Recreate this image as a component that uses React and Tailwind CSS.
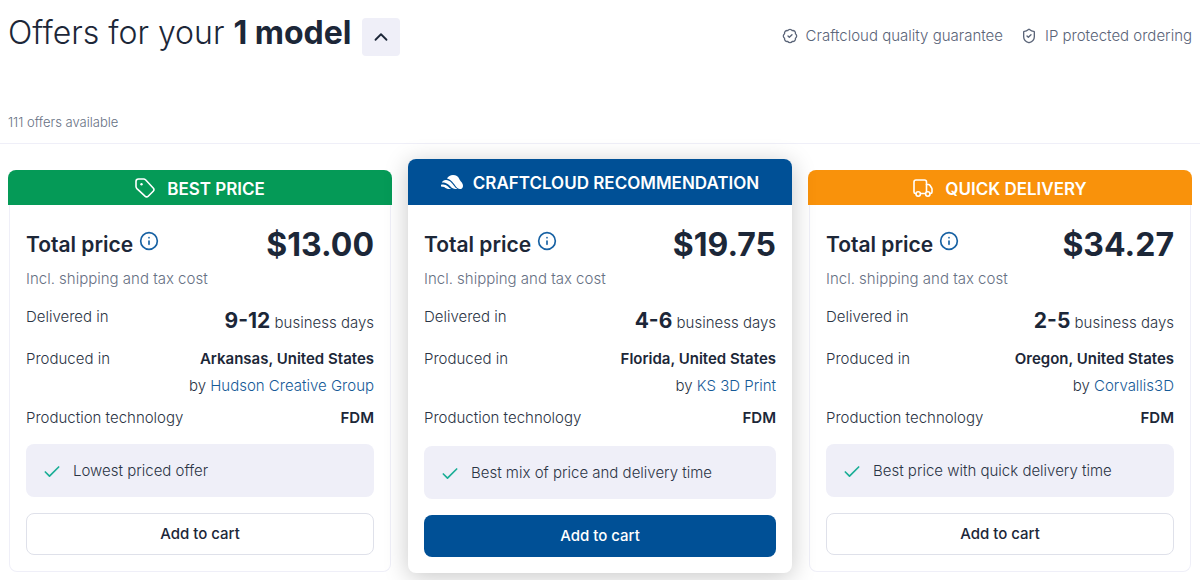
import React from 'react';
import { BadgeCheck, Check, ChevronUp, Info, ShieldCheck } from 'lucide-react';

const offers = [
    {
        id: 'price',
        title: 'BEST PRICE',
        price: '$13.00',
        days: '9-12',
        location: 'Arkansas, United States',
        vendor: 'Hudson Creative Group',
        technology: 'FDM',
        note: 'Lowest priced offer',
    },
    {
        id: 'recommended',
        title: 'CRAFTCLOUD RECOMMENDATION',
        price: '$19.75',
        days: '4-6',
        location: 'Florida, United States',
        vendor: 'KS 3D Print',
        technology: 'FDM',
        note: 'Best mix of price and delivery time',
    },
    {
        id: 'delivery',
        title: 'QUICK DELIVERY',
        price: '$34.27',
        days: '2-5',
        location: 'Oregon, United States',
        vendor: 'Corvallis3D',
        technology: 'FDM',
        note: 'Best price with quick delivery time',
    },
];

const bannerColors = {
    price: 'bg-[#059a57] h-[35px]',
    recommended: 'bg-[#005096] h-[46px]',
    delivery: 'bg-[#f9920b] h-[35px]',
};

function CloudLogo() {
    return (
        <svg viewBox="0 0 22 14" className="h-[14px] w-[22px]" fill="currentColor" aria-hidden="true">
            <path d="M6 3.600C7.200 1.300 9.400 0 12 0c3.200 0 5.300 1.500 6.300 4 .4 1 .9 1.600 1.600 2.400 1.400 1.500 2.100 2.900 2.100 4.500 0 1.900-1.300 3.100-3.100 3.100-1.800 0-2.800-.9-4-2.500C12.700 8.600 10.300 4.600 6 3.600z" />
            <path d="M.8 7.600C1.600 5.600 3.200 4.800 5.200 5c4 .5 5.800 3.200 7.800 5.800 1.100 1.500 2 2.500 3.400 3.200-3 .2-5-.4-6.700-2.200C7.300 9.300 5.300 7.500.8 7.600z" />
            <path d="M0 9.700c3-.8 5.200.1 7 1.900.9 1 1.900 1.900 3.200 2.400-2.500 0-4.200-.1-5.700-1.100-1.500-1-2.300-1.200-4.100-1.100C0 11.200-.1 10.500 0 9.700z" />
        </svg>
    );
}

function TagIcon() {
    return (
        <svg viewBox="0 0 20 20" className="h-5 w-5" fill="none" stroke="currentColor" strokeWidth="1.600" strokeLinecap="round" strokeLinejoin="round" aria-hidden="true">
            <path d="M1 3.500C1 2 2 1 3.500 1h5.200c.7 0 1.300.3 1.800.8l7.700 8.200c.9 1 .9 2.300 0 3.200l-5 5c-.9.900-2.300.9-3.200 0L1.900 10.600C1.300 10 1 9.300 1 8.600z" />
            <circle cx="6.500" cy="6.200" r="1.200" fill="currentColor" stroke="none" />
        </svg>
    );
}

function TruckIcon() {
    return (
        <svg viewBox="0 0 20 20" className="h-5 w-5" fill="none" stroke="currentColor" strokeWidth="1.600" strokeLinecap="round" strokeLinejoin="round" aria-hidden="true">
            <path d="M2.500 15.500C1.500 15.500 1 14.800 1 14V4c0-1.200.8-2 2-2h8.500c1.200 0 2 .8 2 2v11.500H8" />
            <path d="M13.500 6.500h2c.6 0 1 .3 1.400.8l1.600 2.400c.3.500.5.900.5 1.400V14c0 .9-.6 1.500-1.500 1.500" />
            <circle cx="5.200" cy="16" r="2.200" />
            <circle cx="14.800" cy="16" r="2.200" fill="#f9920b" />
        </svg>
    );
}

function BannerIcon({ id }) {
    if (id === 'price') return <TagIcon />;
    if (id === 'delivery') return <TruckIcon />;
    return <CloudLogo />;
}

function Row({ label, children }) {
    return (
        <div className="flex items-start justify-between">
            <dt>{label}</dt>
            <dd className="text-right">{children}</dd>
        </div>
    );
}

function OfferCard({ offer }) {
    const featured = offer.id === 'recommended';

    return (
        <article className={featured ? 'relative z-10 rounded-lg bg-white shadow-[0_4px_24px_rgba(0,0,0,0.22)]' : 'mt-[11px]'}>
            <h2 className={`flex items-center justify-center rounded-t-lg text-[17px] leading-6 font-semibold text-white ${featured ? 'gap-[10px]' : 'gap-3'} ${bannerColors[offer.id]}`}>
                <BannerIcon id={offer.id} />
                <span className="pt-0.5">{offer.title}</span>
            </h2>

            <div className={featured ? 'px-4 pt-5 pb-4' : 'mx-px rounded-b-lg border border-t-0 border-[#efeff8] px-4 pt-5 pb-4'}>
                <div className="flex items-center justify-between text-[#1c2738]">
                    <h3 className="flex items-start gap-[6px] text-[21px] leading-7 font-semibold">
                        Total price
                        <button type="button" aria-label="Price details" className="text-[#1761a3]">
                            <Info className="h-5 w-5" />
                        </button>
                    </h3>
                    <span className="text-[32px] leading-10 font-bold">{offer.price}</span>
                </div>
                <p className="mt-1 leading-5 text-[#667083]">Incl. shipping and tax cost</p>

                <dl className="mt-4 leading-6">
                    <Row label="Delivered in">
                        <span className="text-[21px] leading-8 font-bold text-[#1c2738]">{offer.days}</span> business days
                    </Row>
                    <div className="mt-[10px]">
                        <Row label="Produced in">
                            <div className="font-semibold text-[#1c2738]">{offer.location}</div>
                            <div className="mt-[3px]">
                                by <a href="#vendor" className="text-[#155a97]">{offer.vendor}</a>
                            </div>
                        </Row>
                    </div>
                    <div className="mt-2">
                        <Row label="Production technology">
                            <span className="font-semibold text-[#1c2738]">{offer.technology}</span>
                        </Row>
                    </div>
                </dl>

                <div className={`flex h-[53px] items-center gap-[11px] rounded-lg bg-[#efeff8] px-4 pt-0.5 ${featured ? 'mt-4' : 'mt-[14px]'}`}>
                    <Check className="h-5 w-5 text-[#1aae96]" strokeWidth={2} />
                    {offer.note}
                </div>

                <button
                    type="button"
                    className={`mt-4 h-[42px] w-full rounded-lg font-medium ${featured ? 'bg-[#005096] text-white' : 'border border-[#dfe1ea] bg-white text-[#1c2738]'}`}
                >
                    Add to cart
                </button>
            </div>
        </article>
    );
}

function App() {
    return (
        <main className="overflow-hidden bg-white pb-8 font-['Inter','Liberation_Sans',sans-serif] text-[15px] font-light text-[#2b3445]">
            <header className="flex items-start justify-between px-2 pt-[13px]">
                <div className="flex items-start gap-[10px]">
                    <h1 className="text-[32px] leading-10 font-light text-[#1c2738]">
                        Offers for your <strong className="font-bold">1 model</strong>
                    </h1>
                    <button type="button" aria-label="Hide models" className="mt-[5px] flex h-[38px] w-[38px] items-center justify-center rounded bg-[#efeff8] text-[#1c2738]">
                        <ChevronUp className="h-[22px] w-[22px]" strokeWidth={2} />
                    </button>
                </div>
                <ul className="mt-[11px] flex gap-[18px] leading-6 text-[#5a6478]">
                    <li className="flex items-center gap-2">
                        <BadgeCheck className="h-4 w-4" strokeWidth={2} />
                        Craftcloud quality guarantee
                    </li>
                    <li className="flex items-center gap-2">
                        <ShieldCheck className="h-4 w-4" strokeWidth={2} />
                        IP protected ordering
                    </li>
                </ul>
            </header>

            <p className="mt-14 border-b border-[#efeff8] px-2 pb-[11px] text-[13px] leading-5 text-[#667083]">111 offers available</p>

            <section className="grid grid-cols-3 gap-4 px-2 pt-[15px]">
                {offers.map((offer) => (
                    <OfferCard key={offer.id} offer={offer} />
                ))}
            </section>
        </main>
    );
}

export default App;
